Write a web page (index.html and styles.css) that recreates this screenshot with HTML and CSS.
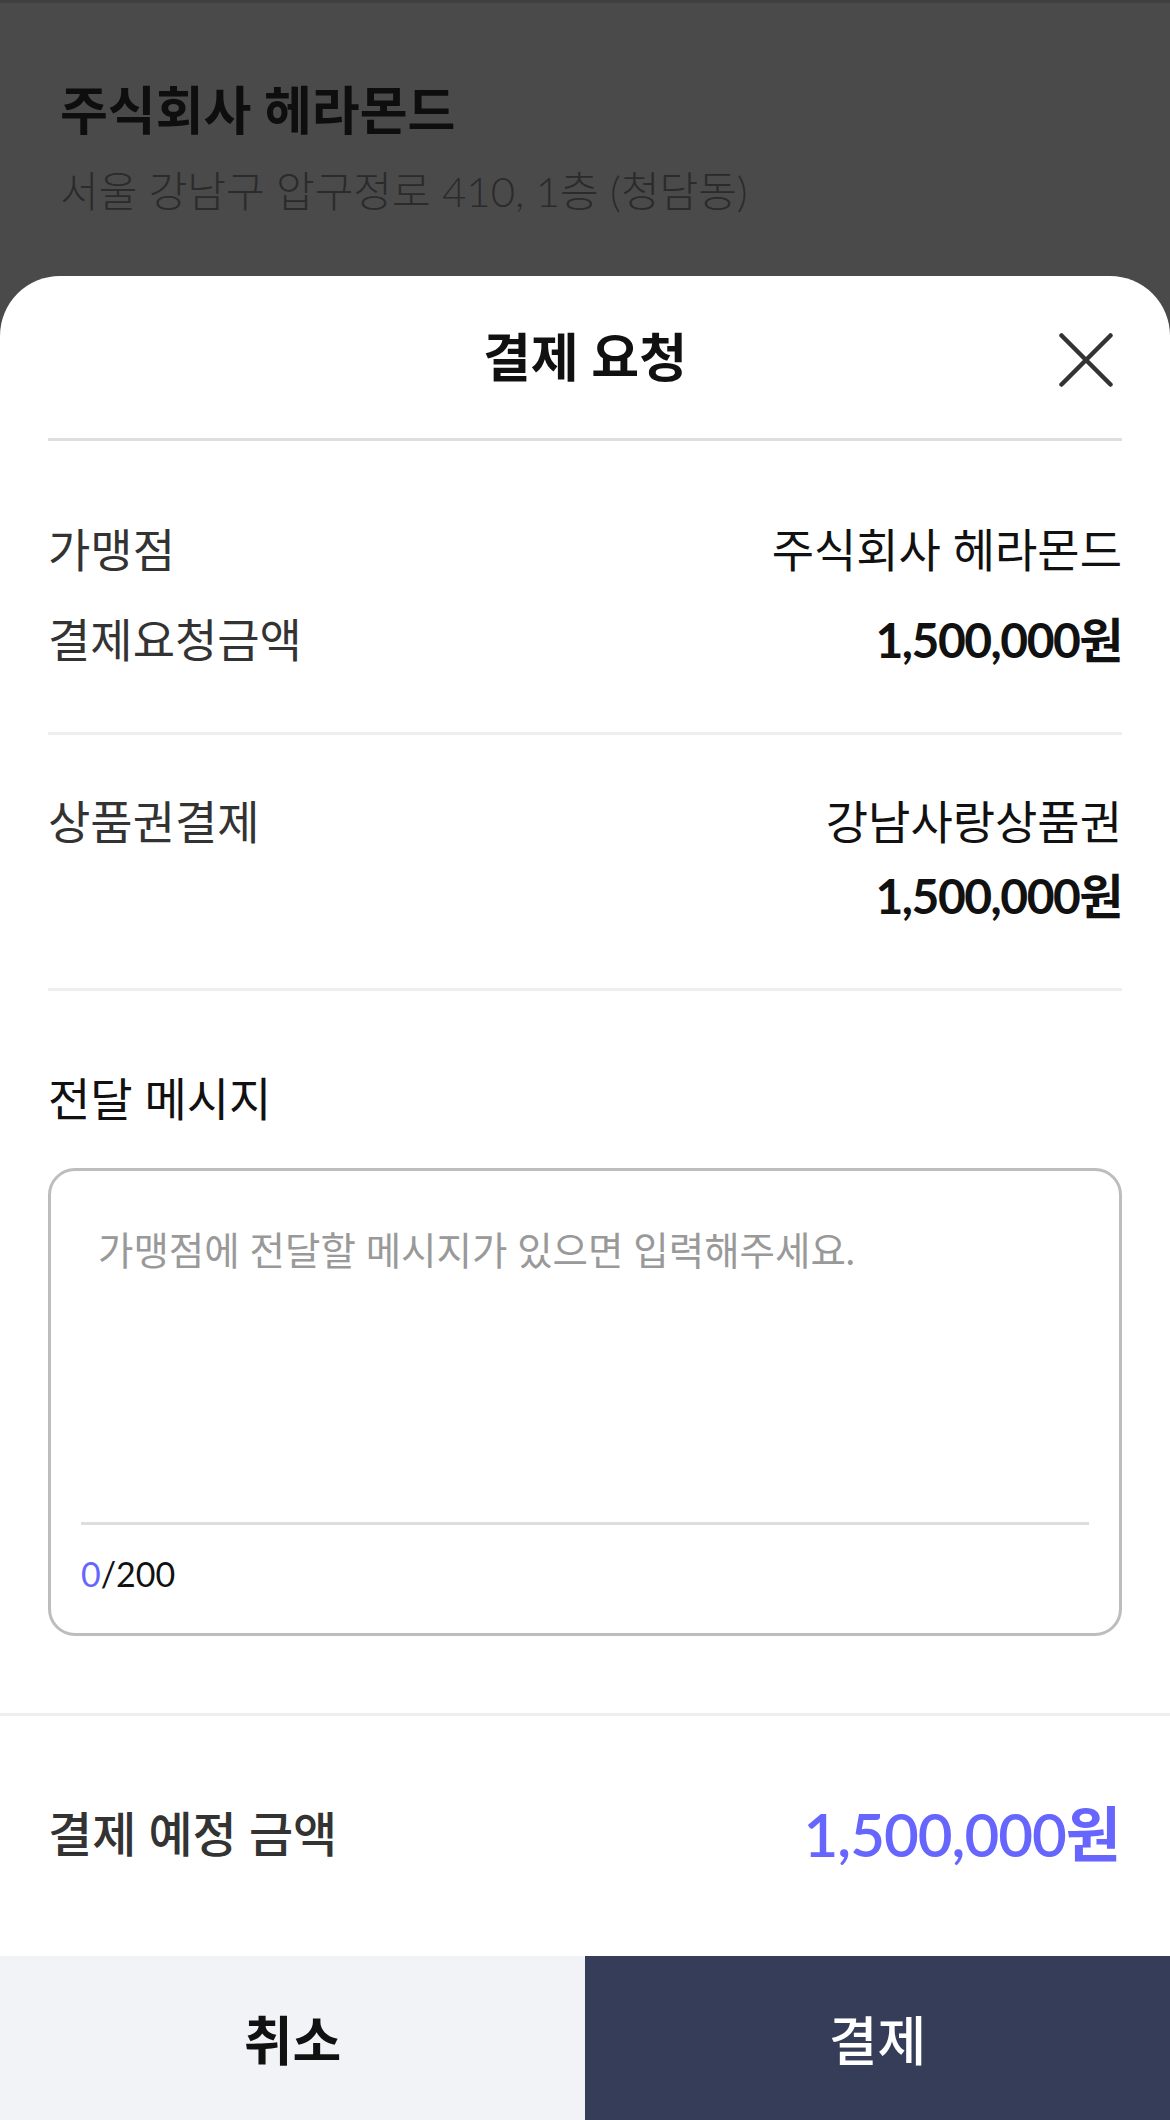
FILE: index.html
```html
<!DOCTYPE html>
<html lang="ko">
<head>
    <meta charset="UTF-8">
    <meta name="viewport" content="width=device-width, initial-scale=1.0">
    <title>결제 요청</title>
    <link rel="stylesheet" href="styles.css">
</head>
<body>
    <div class="backdrop">
        <h1 class="store-name">주식회사 헤라몬드</h1>
        <p class="store-address">서울 강남구 압구정로 410, 1층 (청담동)</p>
    </div>

    <div class="sheet">
        <div class="sheet-header">
            <span></span>
            <h2 class="sheet-title">결제 요청</h2>
            <button class="close-btn" aria-label="닫기">
                <svg width="54" height="54" viewBox="0 0 54 54">
                    <line x1="2.5" y1="2.5" x2="51.5" y2="51.5" stroke="#333" stroke-width="4.5" stroke-linecap="round"/>
                    <line x1="51.5" y1="2.5" x2="2.5" y2="51.5" stroke="#333" stroke-width="4.5" stroke-linecap="round"/>
                </svg>
            </button>
        </div>

        <div class="info-section first">
            <div class="info-row">
                <span class="info-label">가맹점</span>
                <span class="info-value">주식회사 헤라몬드</span>
            </div>
            <div class="info-row">
                <span class="info-label">결제요청금액</span>
                <span class="info-value amount">1,500,000원</span>
            </div>
        </div>

        <div class="info-section">
            <div class="info-row">
                <span class="info-label">상품권결제</span>
                <div class="value-stack">
                    <span class="info-value">강남사랑상품권</span>
                    <span class="info-value amount">1,500,000원</span>
                </div>
            </div>
        </div>

        <div class="message-section">
            <label class="message-label" for="message">전달 메시지</label>
            <div class="message-box">
                <textarea id="message" maxlength="200" placeholder="가맹점에 전달할 메시지가 있으면 입력해주세요."></textarea>
                <div class="counter"><span class="count">0</span>/200</div>
            </div>
        </div>

        <div class="total-row">
            <span class="total-label">결제 예정 금액</span>
            <span class="total-value">1,500,000원</span>
        </div>

        <div class="actions">
            <button class="btn-cancel">취소</button>
            <button class="btn-pay">결제</button>
        </div>
    </div>
</body>
</html>
```

FILE: styles.css
```css
body {
    margin: 0;
    padding: 0;
    height: 2120px;
    overflow: hidden;
    background-color: #4a4a4a;
    font-family: 'Lato', 'Noto Sans CJK KR', sans-serif;
    color: #111;
}

button {
    font-family: inherit;
    border: none;
    background: none;
    padding: 0;
    cursor: pointer;
}

.backdrop {
    border-top: 3px solid #404040;
    padding: 75px 60px 57px;
}

.store-name {
    margin: 0;
    font-size: 52px;
    line-height: 64px;
    font-weight: 700;
    color: #0e0e0e;
}

.store-address {
    margin: 21px 0 0;
    font-size: 42px;
    line-height: 56px;
    font-weight: 300;
    color: #2b2b2b;
}

.sheet {
    background-color: #fff;
    border-radius: 60px 60px 0 0;
    height: 1844px;
    display: flex;
    flex-direction: column;
}

.sheet-header {
    display: grid;
    grid-template-columns: 1fr auto 1fr;
    align-items: center;
    height: 162px;
    margin: 0 48px;
    border-bottom: 3px solid #dedede;
}

.sheet-title {
    margin: 0;
    font-size: 52px;
    line-height: 64px;
    font-weight: 700;
    color: #111;
}

.close-btn {
    justify-self: end;
    margin-right: 9px;
    margin-top: 6px;
    display: flex;
}

.info-section {
    margin: 0 48px;
    padding: 57px 0 62px;
    border-bottom: 3px solid #eee;
    display: flex;
    flex-direction: column;
    gap: 30px;
}

.info-section.first {
    padding-top: 79px;
}

.info-row {
    display: flex;
    justify-content: space-between;
    align-items: flex-start;
}

.info-label {
    font-size: 46px;
    line-height: 60px;
    color: #333;
}

.info-value {
    font-size: 46px;
    line-height: 60px;
    color: #111;
    text-align: right;
}

.info-value.amount {
    font-size: 48px;
    font-weight: 700;
    letter-spacing: -1.5px;
}

.value-stack {
    display: flex;
    flex-direction: column;
    align-items: flex-end;
    gap: 14px;
}

.message-section {
    padding: 78px 48px 77px;
    border-bottom: 3px solid #eee;
}

.message-label {
    display: block;
    font-size: 46px;
    line-height: 60px;
    color: #111;
    margin-bottom: 39px;
}

.message-box {
    border: 3px solid #bdbdbd;
    border-radius: 27px;
    padding: 34px 30px 35px;
}

.message-box textarea {
    display: block;
    width: 100%;
    height: 320px;
    box-sizing: border-box;
    padding: 18px 17px 0;
    border: none;
    border-bottom: 3px solid #ddd;
    outline: none;
    resize: none;
    font-family: inherit;
    font-size: 38.5px;
    line-height: 54px;
    color: #111;
    background: none;
}

.message-box textarea::placeholder {
    color: #999;
}

.counter {
    margin-top: 25px;
    font-size: 34px;
    line-height: 48px;
    color: #111;
}

.count {
    color: #6666ff;
}

.total-row {
    display: flex;
    justify-content: space-between;
    align-items: center;
    padding: 82px 50px 86px 48px;
}

.total-label {
    font-size: 48px;
    line-height: 72px;
    font-weight: 500;
    color: #333;
}

.total-value {
    font-size: 60px;
    line-height: 72px;
    font-weight: 600;
    color: #6666ff;
    letter-spacing: -1px;
}

.actions {
    display: grid;
    grid-template-columns: 1fr 1fr;
    flex: 1;
}

.btn-cancel,
.btn-pay {
    font-size: 53px;
    height: 164px;
}

.btn-cancel {
    background-color: #f2f3f6;
    color: #111;
    font-weight: 700;
}

.btn-pay {
    background-color: #353d59;
    color: #fff;
    font-weight: 500;
}
```
